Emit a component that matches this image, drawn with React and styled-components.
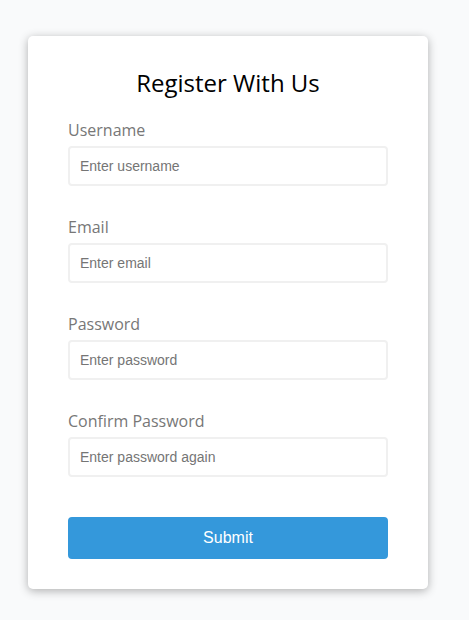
import styled, { createGlobalStyle } from "styled-components";

const GlobalStyle = createGlobalStyle`
  * { box-sizing: border-box; }
  body {
    margin: 0;
    background-color: #f9fafb;
    font-family: "Open Sans", "Liberation Sans", sans-serif;
  }
`;

const Page = styled.div`
  display: flex;
  justify-content: center;
  align-items: flex-start;
  min-height: 100vh;
  padding: 36px 13px 0 0;
`;

const Container = styled.div`
  background-color: #fff;
  border-radius: 5px;
  box-shadow: 0 2px 10px rgba(0, 0, 0, 0.3);
  width: 400px;
`;

const Form = styled.form`
  display: flex;
  flex-direction: column;
  padding: 30px 40px;
`;

const Title = styled.h2`
  text-align: center;
  margin: 0 0 20px;
  font-size: 24px;
  font-weight: 500;
  line-height: 33px;
  color: #000;
`;

const Field = styled.div`
  margin-bottom: 10px;
  padding-bottom: 20px;
`;

const Label = styled.label`
  color: #777;
  display: block;
  font-size: 16px;
  line-height: 22px;
  margin-bottom: 5px;
`;

const Input = styled.input`
  border: 2px solid #f0f0f0;
  border-radius: 4px;
  display: block;
  width: 100%;
  padding: 10px;
  font-family: "Liberation Sans", Arial, sans-serif;
  font-size: 14px;
  line-height: 16px;
  color: #333;
  outline: none;

  &::placeholder {
    color: #757575;
  }
`;

const Button = styled.button`
  cursor: pointer;
  background-color: #3498db;
  border: 2px solid #3498db;
  border-radius: 4px;
  color: #fff;
  display: block;
  font-family: "Liberation Sans", Arial, sans-serif;
  font-size: 16px;
  line-height: 18px;
  padding: 10px;
  margin-top: 10px;
  width: 100%;
`;

const fields = [
  { id: "username", label: "Username", type: "text", placeholder: "Enter username" },
  { id: "email", label: "Email", type: "text", placeholder: "Enter email" },
  { id: "password", label: "Password", type: "password", placeholder: "Enter password" },
  { id: "password2", label: "Confirm Password", type: "password", placeholder: "Enter password again" },
];

const App = () => {
  return (
    <>
      <GlobalStyle />
      <Page>
        <Container>
          <Form onSubmit={(e) => e.preventDefault()}>
            <Title>Register With Us</Title>
            {fields.map((f) => (
              <Field key={f.id}>
                <Label htmlFor={f.id}>{f.label}</Label>
                <Input id={f.id} type={f.type} placeholder={f.placeholder} />
              </Field>
            ))}
            <Button type="submit">Submit</Button>
          </Form>
        </Container>
      </Page>
    </>
  );
};

export default App;
